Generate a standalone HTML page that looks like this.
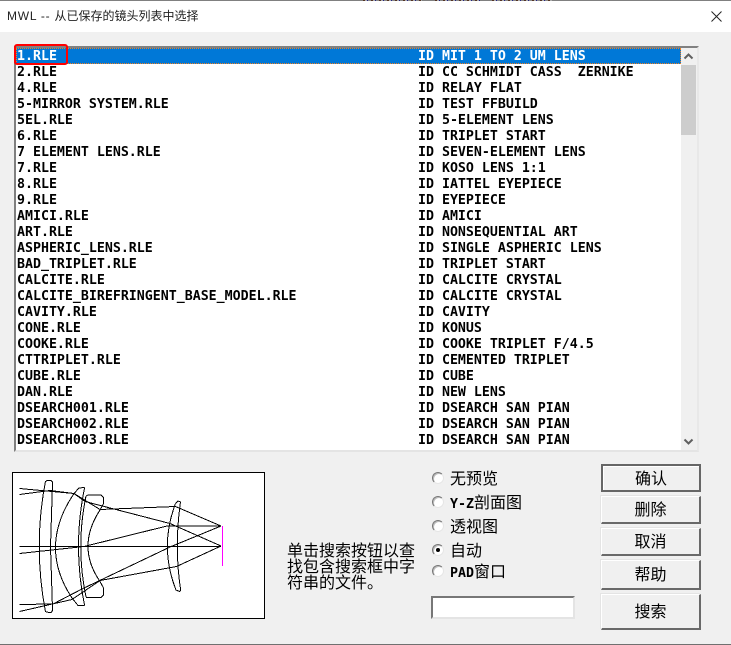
<!DOCTYPE html>
<html lang="zh">
<head>
<meta charset="utf-8">
<title>MWL</title>
<style>
html,body{margin:0;padding:0}
body{width:731px;height:645px;overflow:hidden;position:relative;background:#f0f0f0;font-family:"Liberation Sans","WenQuanYi Zen Hei","Noto Sans CJK SC",sans-serif;color:#000}
div{box-sizing:border-box}
#tb{position:absolute;left:0;top:0;width:731px;height:32px;background:#fff;border-top:1px solid #808080}
#title{position:absolute;left:7px;top:8px;font:12px/16px "Liberation Sans","Noto Sans CJK SC",sans-serif;color:#222;white-space:pre}
#title span{letter-spacing:.75px}
.frag{position:absolute;top:0;height:1px;background:repeating-linear-gradient(90deg,#532 0 2px,#aaa 2px 4px,#228 4px 5px,#888 5px 8px)}
#list{position:absolute;left:14px;top:46px;width:685px;height:406px;background:#fff;border-top:2px solid #808080;border-left:2px solid #808080;border-right:2px solid #e8e8e8;border-bottom:2px solid #e4e4e4;overflow:hidden}
#sel{position:absolute;left:0;top:0;width:665px;height:16px;background:#0078d7;outline:1px dotted #f08020;outline-offset:-1px}
#rows{position:absolute;left:1px;top:1px;width:664px;height:401px;overflow:hidden;font:bold 13.28px/16px "DejaVu Sans Mono","Liberation Mono",monospace}
.r{height:16px;white-space:pre}
.r b{display:inline-block;width:401px;font-weight:bold}
.r i{font-style:normal}
.r.s{color:#fff}
#sb{position:absolute;left:665px;top:0;width:17px;height:402px;background:#f0f0f0}
#th{position:absolute;left:0;top:17px;width:15px;height:70px;background:#cdcdcd}
#pv{position:absolute;left:12px;top:472px;width:253px;height:147px;background:#fff;border:1px solid #000}
.rd{position:absolute;left:432px;width:12px;height:12px;border-radius:50%;background:#fff;border:1px solid;border-color:#777 #e6e6e6 #e6e6e6 #777;box-shadow:inset 1px 1px 0 #bbb}
.rd.on:after{content:"";position:absolute;left:3px;top:3px;width:4px;height:4px;border-radius:50%;background:#000}
.lb{position:absolute;left:450px;height:16px;font:16px/16px "WenQuanYi Zen Hei","Noto Sans CJK SC",sans-serif;white-space:pre}
.lb span{font:bold 13.28px/16px "DejaVu Sans Mono","Liberation Mono",monospace}
#hint{position:absolute;left:287px;top:541px;width:130px;font:16px/16px "WenQuanYi Zen Hei","Noto Sans CJK SC",sans-serif}
#inp{position:absolute;left:431px;top:596px;width:144px;height:23px;background:#fff;border-top:2px solid #777;border-left:2px solid #777;border-right:2px solid #e4e4e4;border-bottom:2px solid #e4e4e4}
.btn{position:absolute;left:601px;width:100px;padding-bottom:3px;background:#f0f0f0;border-top:1px solid #fff;border-left:1px solid #fff;border-right:2px solid #696969;border-bottom:2px solid #696969;text-align:center;font:16px/16px "WenQuanYi Zen Hei","Noto Sans CJK SC",sans-serif;display:flex;align-items:center;justify-content:center;box-shadow:-1px -1px 0 #e4e4e4}
.btn.d{border:2px solid #666;box-shadow:inset 1px 1px 0 #fff}
#over{position:absolute;left:0;top:0;width:731px;height:645px;pointer-events:none}
#red{position:absolute;left:14px;top:44px;width:54px;height:21px;border:2px solid #f00;border-radius:3px}
#bot{position:absolute;left:0;top:644px;width:731px;height:1px;background:#707070}
</style>
</head>
<body>
<div id="tb"></div>
<div class="frag" style="left:363px;width:59px"></div>
<div class="frag" style="left:435px;width:45px"></div>
<div class="frag" style="left:492px;width:60px"></div>
<div id="title"><span>MWL -- </span>从已保存的镜头列表中选择</div>

<div id="list">
  <div id="sel"></div>
  <div id="rows">
<div class="r s"><b>1.RLE</b><i>ID MIT 1 TO 2 UM LENS</i></div>
<div class="r"><b>2.RLE</b><i>ID CC SCHMIDT CASS  ZERNIKE</i></div>
<div class="r"><b>4.RLE</b><i>ID RELAY FLAT</i></div>
<div class="r"><b>5-MIRROR SYSTEM.RLE</b><i>ID TEST FFBUILD</i></div>
<div class="r"><b>5EL.RLE</b><i>ID 5-ELEMENT LENS</i></div>
<div class="r"><b>6.RLE</b><i>ID TRIPLET START</i></div>
<div class="r"><b>7 ELEMENT LENS.RLE</b><i>ID SEVEN-ELEMENT LENS</i></div>
<div class="r"><b>7.RLE</b><i>ID KOSO LENS 1:1</i></div>
<div class="r"><b>8.RLE</b><i>ID IATTEL EYEPIECE</i></div>
<div class="r"><b>9.RLE</b><i>ID EYEPIECE</i></div>
<div class="r"><b>AMICI.RLE</b><i>ID AMICI</i></div>
<div class="r"><b>ART.RLE</b><i>ID NONSEQUENTIAL ART</i></div>
<div class="r"><b>ASPHERIC_LENS.RLE</b><i>ID SINGLE ASPHERIC LENS</i></div>
<div class="r"><b>BAD_TRIPLET.RLE</b><i>ID TRIPLET START</i></div>
<div class="r"><b>CALCITE.RLE</b><i>ID CALCITE CRYSTAL</i></div>
<div class="r"><b>CALCITE_BIREFRINGENT_BASE_MODEL.RLE</b><i>ID CALCITE CRYSTAL</i></div>
<div class="r"><b>CAVITY.RLE</b><i>ID CAVITY</i></div>
<div class="r"><b>CONE.RLE</b><i>ID KONUS</i></div>
<div class="r"><b>COOKE.RLE</b><i>ID COOKE TRIPLET F/4.5</i></div>
<div class="r"><b>CTTRIPLET.RLE</b><i>ID CEMENTED TRIPLET</i></div>
<div class="r"><b>CUBE.RLE</b><i>ID CUBE</i></div>
<div class="r"><b>DAN.RLE</b><i>ID NEW LENS</i></div>
<div class="r"><b>DSEARCH001.RLE</b><i>ID DSEARCH SAN PIAN</i></div>
<div class="r"><b>DSEARCH002.RLE</b><i>ID DSEARCH SAN PIAN</i></div>
<div class="r"><b>DSEARCH003.RLE</b><i>ID DSEARCH SAN PIAN</i></div>
  </div>
  <div id="sb"><div id="th"></div></div>
</div>

<div id="pv"></div>

<div id="hint">单击搜索按钮以查找包含搜索框中字符串的文件。</div>

<div class="rd" style="top:472px"></div><div class="lb" style="top:469px">无预览</div>
<div class="rd" style="top:496px"></div><div class="lb" style="top:493px"><span>Y-Z</span>剖面图</div>
<div class="rd" style="top:520px"></div><div class="lb" style="top:517px">透视图</div>
<div class="rd on" style="top:544px"></div><div class="lb" style="top:541px">自动</div>
<div class="rd" style="top:565px"></div><div class="lb" style="top:562px"><span>PAD</span>窗口</div>

<div id="inp"></div>

<div class="btn d" style="top:464px;height:28px">确认</div>
<div class="btn" style="top:496px;height:28px">删除</div>
<div class="btn" style="top:528px;height:28px">取消</div>
<div class="btn" style="top:560px;height:30px">帮助</div>
<div class="btn" style="top:594px;height:36px">搜索</div>

<svg id="over" viewBox="0 0 731 645" xmlns="http://www.w3.org/2000/svg">
  <path d="M711.5 11.5L721.5 21.5M721.5 11.5L711.5 21.5" stroke="#222" stroke-width="1" fill="none"/>
  <path d="M684.5 58.5L688.5 54.5L692.5 58.5" stroke="#606060" stroke-width="2" fill="none"/>
  <path d="M684.5 439.5L688.5 443.5L692.5 439.5" stroke="#606060" stroke-width="2" fill="none"/>
  <g fill="none" stroke="#000" stroke-width="1" shape-rendering="crispEdges">
    <path d="M45.5 481Q33 546.7 45.5 612"/>
    <path d="M46 481Q47 480.5 50 480.5Q52.5 480.5 52.5 483L50.5 546.7L52.5 609Q52.5 612.5 50 612.5L46 612"/>
    <path d="M74 493.5Q38 546.7 72 598"/>
    <path d="M74 493.5L79 488L84 487.5L84.5 488Q72.5 546.7 84.5 605L84 605.5L78 605.5L72 598"/>
    <path d="M86 496Q75.5 546.7 86 597"/>
    <path d="M86 496L88 495L101 495L103.5 497.5L103.5 503.5L100 510Q76 546.7 100 581.5L103.5 588L103.5 595L101 597.5L86 597.5"/>
    <path d="M175.5 503.5Q159 546.7 176 590L179.5 591.5L180.7 590.5Q174 546.7 180.5 502L178 501L175.5 503.5"/>
    <path d="M19.5 488.5L74 493.5L100 509.5L175.5 506.5L221 526"/>
    <path d="M19.5 494.5L50 490.5L74 493.5L85 501.5L170 523.5L221 546"/>
    <path d="M19.5 546.5L221 546.5"/>
    <path d="M19.5 553.5L84 546.5L167 526L221 526"/>
    <path d="M19.5 604.5L53 604L83 588.5L170 547L221 526"/>
    <path d="M19.5 611.5L72 599.5L100 580.5L176.5 566.5L221 546"/>
  </g>
  <path d="M222.5 526L222.5 566" stroke="#ff00ff" stroke-width="1" fill="none"/>
</svg>
<div id="red"></div>
<div id="bot"></div>
</body>
</html>
